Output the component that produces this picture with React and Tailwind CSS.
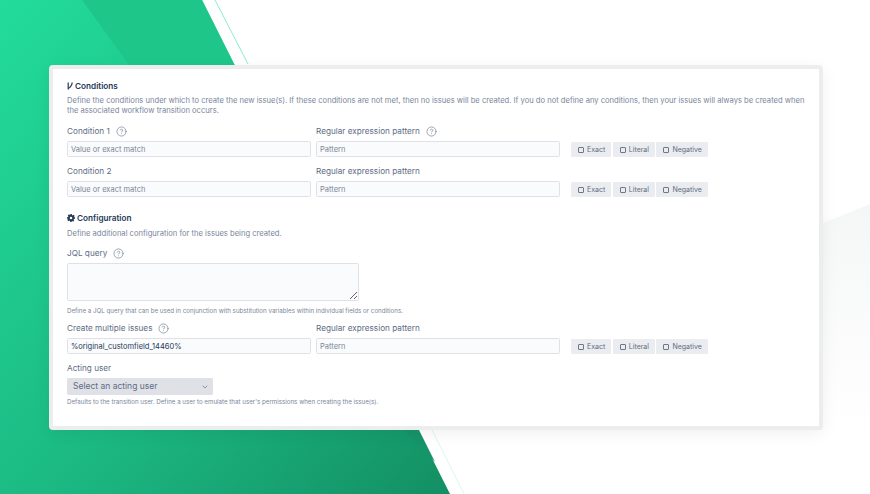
import React from 'react';
import { ChevronDown, CircleHelp } from 'lucide-react';

const Help = () => <CircleHelp className="w-[11px] h-[11px] text-[#6b778c] ml-[6px]" strokeWidth={1.4} />;

const Label = ({ children, help }) => (
  <div className="flex items-center h-[12px] text-[8.2px] leading-[12px] text-[#5e6c84]">
    {children}
    {help && <Help />}
  </div>
);

const TextInput = ({ placeholder, value }) => (
  <input
    readOnly
    placeholder={placeholder}
    value={value}
    className="block w-full h-[16px] px-[3px] text-[7.5px] bg-[#fafbfc] border border-[#dfe1e6] rounded-[1.5px] text-[#253858] placeholder:text-[#7a869a] outline-none"
  />
);

const Toggle = ({ label }) => (
  <div className="flex items-center h-[15px] pl-[7px] pr-[6px] gap-[3px] bg-[#ebecf0] rounded-[1px] text-[7px] leading-[15px] text-[#5e6c84]">
    <span className="w-[6px] h-[6px] border border-[#6b778c] rounded-[1px]" />
    {label}
  </div>
);

const Toggles = () => (
  <div className="flex gap-[1.5px] ml-[6px] mt-[1px]">
    <Toggle label="Exact" />
    <Toggle label="Literal" />
    <Toggle label="Negative" />
  </div>
);

const ConditionRow = ({ label, help, patternHelp, placeholder, value, className }) => (
  <div className={className}>
    <div className="flex gap-[5px]">
      <div className="w-[244px]"><Label help={help}>{label}</Label></div>
      <div className="w-[244px]"><Label help={patternHelp}>Regular expression pattern</Label></div>
    </div>
    <div className="flex items-start gap-[5px] mt-[4px]">
      <div className="w-[244px]"><TextInput placeholder={placeholder} value={value} /></div>
      <div className="w-[244px]"><TextInput placeholder="Pattern" /></div>
      <Toggles />
    </div>
  </div>
);

const Background = () => (
  <svg className="absolute inset-0" width="870" height="494" viewBox="0 0 870 494">
    <defs>
      <linearGradient id="green" x1="0" y1="0" x2="1" y2="1">
        <stop offset="0" stopColor="#22dc9b" />
        <stop offset="0.55" stopColor="#1cb983" />
        <stop offset="1" stopColor="#138f64" />
      </linearGradient>
      <linearGradient id="grey" x1="0" y1="0" x2="0" y2="1">
        <stop offset="0" stopColor="#f5f6f6" />
        <stop offset="1" stopColor="#ffffff" />
      </linearGradient>
    </defs>
    <polygon points="0,0 202,0 450,494 0,494" fill="url(#green)" />
    <polygon points="82,0 202,0 235,66 130,66" fill="#1fc689" />
    <polygon points="404,430 419,430 435,462" fill="#17946a" />
    <line x1="215" y1="0" x2="248" y2="64" stroke="#5fe3b8" strokeWidth="0.7" />
    <line x1="432" y1="430" x2="464" y2="494" stroke="#c9f3e4" strokeWidth="0.7" />
    <polygon points="823,223 870,204 870,430 823,430" fill="url(#grey)" />
  </svg>
);

// small branch-like glyph in front of the Conditions heading
const ConditionIcon = () => (
  <svg width="6" height="8" viewBox="0 0 6 8" fill="none" stroke="#253858" strokeWidth="1.2">
    <path d="M1.2 0.5V7.5" />
    <path d="M5.2 0.5C5 3 3.6 5 1.2 6.5" />
  </svg>
);

const GearIcon = () => (
  <svg width="8" height="8" viewBox="0 0 8 8">
    <path
      fillRule="evenodd"
      fill="#253858"
      d="M3.2 0h1.6l.2 1.1.7.3.9-.6 1.1 1.1-.6.9.3.7L8 3.2v1.6l-1.1.2-.3.7.6.9-1.1 1.1-.9-.6-.7.3L4.8 8H3.2L3 6.9l-.7-.3-.9.6L.3 6.1l.6-.9-.3-.7L0 4.8V3.2L1.1 3l.3-.7-.6-.9L1.9.3l.9.6.7-.3zM4 2.7a1.3 1.3 0 1 0 0 2.6 1.3 1.3 0 0 0 0-2.6z"
    />
  </svg>
);

export default function App() {
  return (
    <div className="relative w-[870px] h-[494px] overflow-hidden bg-white" style={{ fontFamily: 'Inter, sans-serif' }}>
      <Background />
      <div className="relative ml-[49px] pt-[65px] w-[774px]">
        <div className="h-[365px] bg-white border-[4px] border-[#eceeee] rounded-[4px] px-[14px] pt-[11px] shadow-[0_4px_16px_rgba(0,0,0,0.06)]">
          <div className="flex items-center h-[12px] gap-[2px] text-[8.2px] font-semibold text-[#253858]">
            <ConditionIcon />
            Conditions
          </div>
          <p className="mt-[4px] text-[7.6px] leading-[10px] text-[#7a869a]">
            Define the conditions under which to create the new issue(s). If these conditions are not met, then no issues will be created. If you do not define any conditions, then your issues will always be created when the associated workflow transition occurs.
          </p>
          <ConditionRow className="mt-[9px]" label="Condition 1" help patternHelp placeholder="Value or exact match" />
          <ConditionRow className="mt-[8px]" label="Condition 2" placeholder="Value or exact match" />

          <div className="flex items-center h-[12px] gap-[2px] mt-[15px] text-[8.2px] font-semibold text-[#253858]">
            <GearIcon />
            Configuration
          </div>
          <p className="mt-[5px] text-[7.6px] leading-[10px] text-[#7a869a]">
            Define additional configuration for the issues being created.
          </p>
          <div className="mt-[8px]"><Label help>JQL query</Label></div>
          <textarea readOnly className="block mt-[4px] w-[292px] h-[38px] bg-[#fafbfc] border border-[#dfe1e6] rounded-[1.5px] outline-none" />
          <p className="mt-[6px] text-[6.2px] leading-[8px] text-[#7a869a]">
            Define a JQL query that can be used in conjunction with substitution variables within individual fields or conditions.
          </p>
          <ConditionRow className="mt-[7px]" label="Create multiple issues" help value="%original_customfield_14460%" />
          <div className="mt-[8px]"><Label>Acting user</Label></div>
          <div className="flex items-center justify-between mt-[4px] w-[146px] h-[17px] pl-[6px] pr-[4px] bg-[#dfe1e6] rounded-[1.5px] text-[8.5px] text-[#5e6c84]">
            Select an acting user
            <ChevronDown className="w-[8px] h-[8px] text-[#5e6c84]" strokeWidth={2} />
          </div>
          <p className="mt-[3px] text-[6.2px] leading-[8px] text-[#7a869a]">
            Defaults to the transition user. Define a user to emulate that user's permissions when creating the issue(s).
          </p>
        </div>
      </div>
    </div>
  );
}
